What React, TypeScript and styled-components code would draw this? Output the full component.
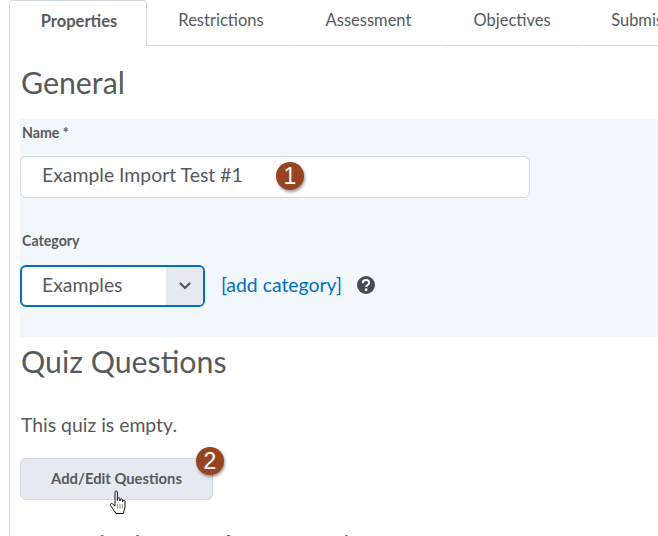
import React from "react";
import styled, { createGlobalStyle } from "styled-components";

const GlobalStyle = createGlobalStyle`
  html, body {
    margin: 0;
    padding: 0;
    background: #fff;
    overflow: hidden;
  }
  body {
    font-family: Lato, "Liberation Sans", sans-serif;
    color: #565a5c;
  }
`;

const Page = styled.div`
  width: 658px;
  height: 536px;
  overflow: hidden;
  padding-left: 9px;
  box-sizing: border-box;
`;

const TabBar = styled.div`
  display: flex;
  height: 46px;
  white-space: nowrap;
`;

const Tab = styled.div<{ $active?: boolean; $width: number }>`
  flex: none;
  box-sizing: border-box;
  width: ${(p) => p.$width}px;
  height: 46px;
  padding-top: 10px;
  padding-left: ${(p) => (p.$active ? "2px" : "0")};
  text-align: center;
  font-size: 16.5px;
  line-height: 20px;
  font-weight: ${(p) => (p.$active ? 700 : 400)};
  border-bottom: ${(p) => (p.$active ? "none" : "1px solid #d3d9e3")};
  border-right: ${(p) => (p.$active ? "1px solid #d3d9e3" : "none")};
  border-left: ${(p) => (p.$active ? "1px solid #d3d9e3" : "none")};
  border-top: ${(p) => (p.$active ? "1px solid #d3d9e3" : "none")};
  border-radius: ${(p) => (p.$active ? "4px 4px 0 0" : "0")};
  margin-right: ${(p) => (p.$active ? "0" : "1px")};
`;

const Content = styled.div`
  display: flow-root;
  height: 490px;
  padding-left: 10px;
  border-left: 1px solid #d3d9e3;
`;

const Heading = styled.h2<{ $top: number; $bottom: number }>`
  margin: ${(p) => p.$top}px 0 ${(p) => p.$bottom}px 1px;
  font-size: 30.3px;
  line-height: 38px;
  font-weight: 400;
  color: #565a5c;
`;

const FormPanel = styled.div`
  background: #f2f7fc;
  height: 218px;
  box-sizing: border-box;
  padding-top: 5px;
`;

const FieldLabel = styled.label<{ $bottom: number }>`
  display: block;
  margin: 0 0 ${(p) => p.$bottom}px 2px;
  font-size: 14.2px;
  line-height: 17px;
  font-weight: 700;
`;

const TextField = styled.div`
  position: relative;
  box-sizing: border-box;
  width: 510px;
  height: 42px;
  margin-bottom: 34px;
  padding-left: 21px;
  background: #fff;
  border: 1px solid #d3d9e3;
  border-radius: 6px;
  font-size: 19.4px;
  line-height: 36px;
`;

const SelectRow = styled.div`
  display: flex;
  align-items: center;
`;

const Select = styled.div`
  display: flex;
  box-sizing: border-box;
  width: 185px;
  height: 42px;
  background: #fff;
  border: 2px solid #006fbf;
  border-radius: 6px;
  overflow: hidden;
  font-size: 19.4px;
  line-height: 35px;
`;

const SelectValue = styled.div`
  flex: 1;
  padding-left: 20px;
`;

const SelectArrow = styled.div`
  flex: none;
  display: flex;
  align-items: center;
  justify-content: center;
  width: 37px;
  background: #e6eaf0;
`;

const AddLink = styled.a`
  margin: -4px 0 0 16px;
  font-size: 19.4px;
  color: #006fbf;
`;

const HelpIcon = styled.svg`
  margin: -2px 0 0 15px;
  width: 18px;
  height: 18px;
`;

const BodyText = styled.p`
  margin: 0 0 21px 1px;
  font-size: 19.4px;
  line-height: 24px;
`;

const ActionButton = styled.div`
  position: relative;
  box-sizing: border-box;
  width: 193px;
  height: 42px;
  background: #e6eaf0;
  border: 1px solid #d3d9e3;
  border-radius: 6px;
  text-align: center;
  font-size: 14.8px;
  font-weight: 700;
  line-height: 39px;
`;

const Badge = styled.span<{ $left: number; $top: number }>`
  position: absolute;
  left: ${(p) => p.$left}px;
  top: ${(p) => p.$top}px;
  width: 28px;
  height: 28px;
  border-radius: 50%;
  background: #964421;
  box-shadow: 1px 2px 3px rgba(0, 0, 0, 0.4);
  color: #fff;
  text-align: center;
  font-family: "Liberation Sans", sans-serif;
  font-size: 23px;
  font-weight: 400;
  line-height: 28px;
`;

const Cursor = styled.svg`
  position: absolute;
  left: 88px;
  top: 31px;
  width: 20px;
  height: 25px;
`;

const tabs = [
  { label: "Properties", width: 138, active: true },
  { label: "Restrictions", width: 148 },
  { label: "Assessment", width: 145 },
  { label: "Objectives", width: 140 },
  { label: "Submissions", width: 145 },
];

export default function App() {
  return (
    <>
      <GlobalStyle />
      <Page>
        <TabBar>
          {tabs.map((t) => (
            <Tab key={t.label} $active={t.active} $width={t.width}>
              {t.label}
            </Tab>
          ))}
        </TabBar>
        <Content>
          <Heading $top={17} $bottom={18}>General</Heading>
          <FormPanel>
            <FieldLabel $bottom={15}>Name *</FieldLabel>
            <TextField>
              Example Import Test #1
              <Badge $left={255} $top={5}>1</Badge>
            </TextField>
            <FieldLabel $bottom={16}>Category</FieldLabel>
            <SelectRow>
              <Select>
                <SelectValue>Examples</SelectValue>
                <SelectArrow>
                  <svg width="12" height="8" viewBox="0 0 12 8">
                    <path d="M1.5 1.5 6 6l4.5-4.5" fill="none" stroke="#565a5c" strokeWidth="2.2" strokeLinecap="round" strokeLinejoin="round" />
                  </svg>
                </SelectArrow>
              </Select>
              <AddLink>[add category]</AddLink>
              <HelpIcon viewBox="0 0 18 18">
                <circle cx="9" cy="9" r="9" fill="#494c4e" />
                <path d="M5.8 7.2C5.8 5.3 7.2 4 9 4s3.2 1.1 3.2 2.8c0 2.2-3 2.2-3.1 4.2" fill="none" stroke="#fff" strokeWidth="2" />
                <circle cx="9.1" cy="13.7" r="1.4" fill="#fff" />
              </HelpIcon>
            </SelectRow>
          </FormPanel>
          <Heading $top={5} $bottom={33}>Quiz Questions</Heading>
          <BodyText>This quiz is empty.</BodyText>
          <ActionButton>
            Add/Edit Questions
            <Badge $left={175} $top={-12}>2</Badge>
            <Cursor viewBox="0 0 20 25">
              <path d="M6 2c0-1.4 2.4-1.4 2.4 0v8.5l.3-2c.3-1.2 2.2-1 2.2.3v2.2l.4-1.5c.4-1.1 2.2-.8 2.2.4v2l.4-.9c.5-1 2.1-.7 2.1.5V17l-1.6 6.5H7L1.6 15.5c-.9-1.5.9-2.8 2.1-1.6L6 16.2Z" fill="#fff" stroke="#111" strokeWidth="1" strokeLinejoin="round" />
              <path d="M8.6 14v4.5M11 14v4.5M13.4 14v4.5" stroke="#777" strokeWidth="0.8" />
            </Cursor>
          </ActionButton>
          <Heading $top={27} $bottom={0}>Description and Instructions</Heading>
        </Content>
      </Page>
    </>
  );
}
